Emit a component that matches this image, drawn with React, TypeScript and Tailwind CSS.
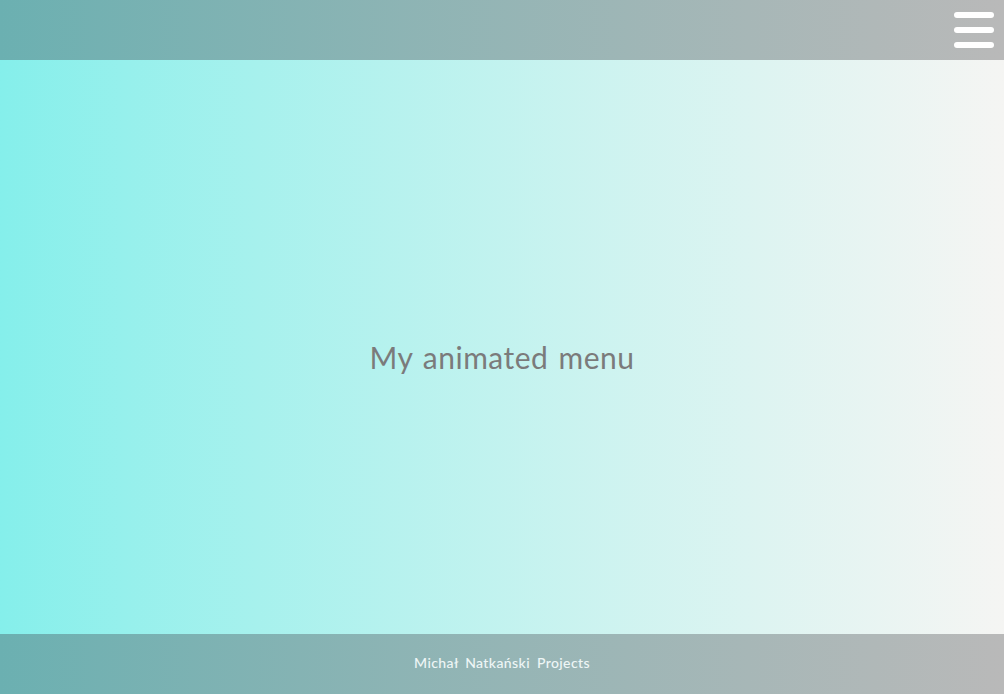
export default function App() {
  return (
    <div className="flex h-[694px] w-[1004px] flex-col font-['Lato',sans-serif]">
      {/* Header */}
      <header className="flex h-[60px] shrink-0 items-center justify-end bg-gradient-to-r from-[#6bb0b1] to-[#b9b9b9] pr-[10px]">
        <button className="flex w-[40px] flex-col gap-[9px]" aria-label="menu">
          <span className="block h-[6px] w-[40px] rounded-[3px] bg-white" />
          <span className="block h-[6px] w-[40px] rounded-[3px] bg-white" />
          <span className="block h-[6px] w-[40px] rounded-[3px] bg-white" />
        </button>
      </header>

      {/* Main */}
      <main className="flex flex-1 items-center justify-center bg-gradient-to-r from-[#85efeb] to-[#f5f5f3] pt-[20px]">
        <h1 className="text-[30px] tracking-[0.5px] text-[#7b7b7b] [word-spacing:2px]">
          My animated menu
        </h1>
      </main>

      {/* Footer */}
      <footer className="flex h-[60px] shrink-0 items-center justify-center bg-gradient-to-r from-[#6bb0b1] to-[#b9b9b9]">
        <p className="-mt-[3px] text-[14px] font-medium tracking-[0.4px] text-[#eef6f6] [word-spacing:3px]">
          Michał Natkański Projects
        </p>
      </footer>
    </div>
  );
}
